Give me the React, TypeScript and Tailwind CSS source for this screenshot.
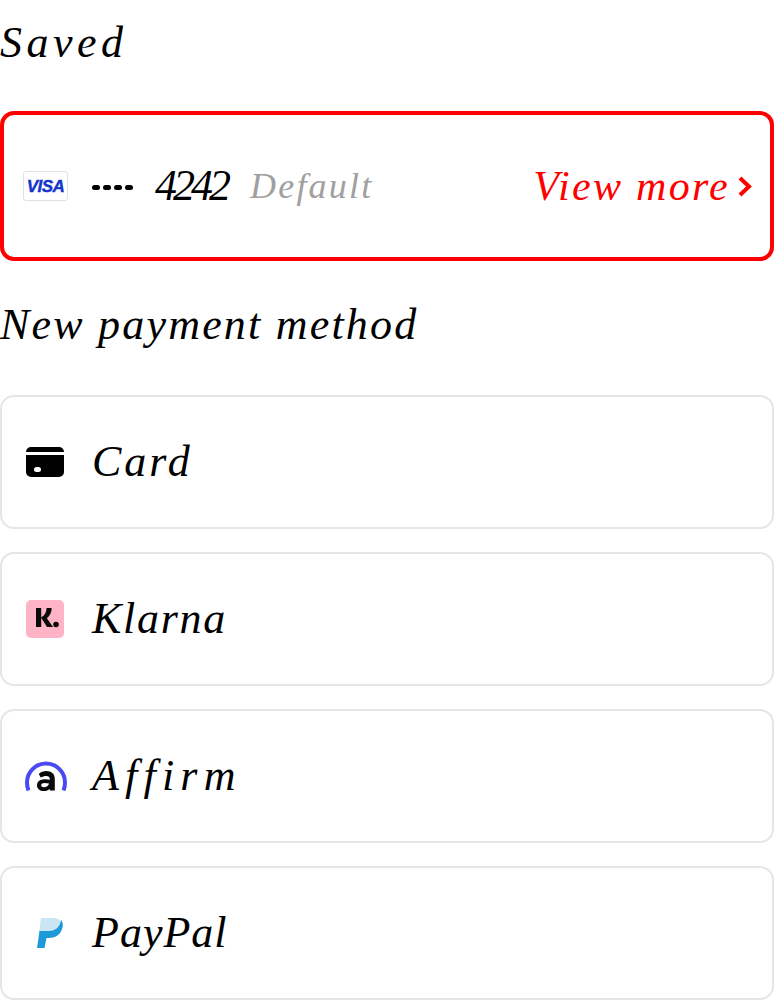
import React from 'react';

const script = "font-['Liberation_Serif',cursive] italic";

const CardIcon = () => (
  <svg viewBox="0 0 38 30" className="w-[38px] h-[30px]">
    <path d="M5 0h28a5 5 0 0 1 5 5v0H0V5a5 5 0 0 1 5-5z" fill="#000" />
    <path fillRule="evenodd" d="M0 8h38v17a5 5 0 0 1-5 5H5a5 5 0 0 1-5-5V8zm10.500 12a2.500 2.500 0 0 0 0 5h2a2.500 2.500 0 0 0 0-5h-2z" fill="#000" />
  </svg>
);

const KlarnaIcon = () => (
  <div className="w-[38px] h-[38px] rounded-[5px] bg-[#ffb3c7] flex items-center justify-center">
    <svg viewBox="0 0 38 38" className="w-[38px] h-[38px]">
      <path d="M10 8h5.200v19H10zM20.500 8h5.200c0 4.200-1.800 7.800-4.800 10.200L27 27h-6l-6-9.600C18.300 15.800 20.500 12.500 20.500 8z" fill="#0a0a0a" />
      <circle cx="30" cy="24.500" r="2.800" fill="#0a0a0a" />
    </svg>
  </div>
);

const AffirmIcon = () => (
  <svg viewBox="0 0 42 30" className="w-[42px] h-[30px]">
    <path d="M3.500 29.500C2.500 27 2 24.500 2 21.500a19 19 0 0 1 38 0c0 3-.5 5.500-1.500 8" fill="none" stroke="#4a4af4" strokeWidth="4" />
    <path fillRule="evenodd" d="M21 10c5.800 0 8.800 3 8.800 8V29.500h-5v-1.800c-1.400 1.500-3.400 2.300-5.800 2.300-4.300 0-7-2.300-7-5.800 0-4 3.300-6 8.400-6 1.500 0 3 .2 4.400.5v-.7c0-2-1.200-3-3.600-3-1.800 0-3.600.5-5.500 1.600l-1.900-3.600C16 10.800 18.400 10 21 10zm-1.200 11.900c-2.400 0-3.600.8-3.600 2.300 0 1.200 1 2 2.600 2 2.600 0 4.800-1.500 5.300-3.800-1.400-.3-2.900-.5-4.300-.5z" fill="#0a0a0a" />
  </svg>
);

const PayPalIcon = () => (
  <svg viewBox="0 0 26 30" className="w-[26px] h-[30px]">
    <path d="M4 0h11c6 0 9.500 2 9 6.500C23.500 11 19 15 13 15H2z" fill="#c9e6f4" />
    <path d="M24 2c1.800 1.800 2.200 4.500 1.500 7.500C24 16 19 20 12 20H9.500L7.500 30H0L2.500 13H12C18.500 13 23 9 24 2z" fill="#1f9ad9" />
  </svg>
);

const methods = [
  { label: 'Card', icon: <CardIcon />, iconClass: 'pl-[24px]', tracking: 'tracking-[3px]' },
  { label: 'Klarna', icon: <KlarnaIcon />, iconClass: 'pl-[24px]', tracking: 'tracking-[1.7px]' },
  { label: 'Affirm', icon: <AffirmIcon />, iconClass: 'pl-[23px]', tracking: 'tracking-[6.2px]' },
  { label: 'PayPal', icon: <PayPalIcon />, iconClass: 'pl-[35px]', tracking: 'tracking-[1px]' },
];

export default function App() {
  return (
    <div className="w-[774px] h-[1000px] overflow-hidden bg-white text-black flex flex-col">
      <h2 className={`${script} h-[111px] pt-[14px] text-[44px] leading-[58px] font-normal tracking-[4.500px]`}>Saved</h2>

      <div className="h-[150px] border-[4px] border-[#ff0000] rounded-[14px] flex items-center pl-[19px] pr-[18px]">
        <div className="w-[45px] h-[30px] border border-[#e0e0e0] rounded-[3px] flex items-center justify-center bg-white">
          <span className="mt-[2px] font-['Liberation_Sans',sans-serif] italic font-bold text-[17px] tracking-[-0.5px] text-[#1434cb] [-webkit-text-stroke:0.4px_#1434cb]">VISA</span>
        </div>
        <span className="ml-[24px] mt-[3px] flex gap-[3px] items-center">
          {[0, 1, 2, 3].map((i) => (
            <span key={i} className="w-[8px] h-[5px] rounded-full bg-black" />
          ))}
        </span>
        <span className={`${script} ml-[22px] text-[44px] leading-none tracking-[-4px]`}>4242</span>
        <span className={`${script} ml-[23px] text-[36px] leading-none text-[#a0a0a0] tracking-[2.200px]`}>Default</span>
        <span className={`${script} ml-auto text-[42px] leading-none text-[#ff0000] tracking-[2.3px]`}>View more</span>
        <svg viewBox="0 0 14 21" className="w-[14px] h-[21px] ml-[8px]">
          <polyline points="2,2 11,10.500 2,19" fill="none" stroke="#ff0000" strokeWidth="4" />
        </svg>
      </div>

      <h2 className={`${script} h-[134px] pt-[35px] text-[44px] leading-[58px] font-normal tracking-[2.2px]`}>New payment method</h2>

      <div className="flex flex-col gap-[23px]">
        {methods.map((m) => (
          <div key={m.label} className="h-[134px] border-2 border-[#e6e6e6] rounded-[14px] flex items-center">
            <div className={`${m.iconClass} w-[88px] shrink-0`}>{m.icon}</div>
            <span className={`${script} ml-[2px] text-[44px] leading-none ${m.tracking}`}>{m.label}</span>
          </div>
        ))}
      </div>
    </div>
  );
}
